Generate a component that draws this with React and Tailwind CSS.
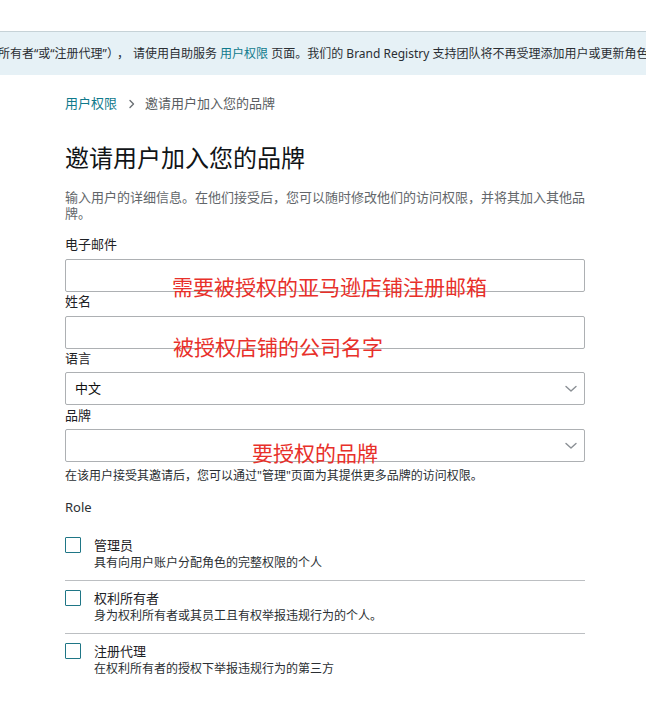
import { useState } from "react";

const FONT = { fontFamily: '"Noto Sans", "Noto Sans CJK SC", sans-serif' };

const roles = [
  { id: "admin", title: "管理员", desc: "具有向用户账户分配角色的完整权限的个人" },
  { id: "owner", title: "权利所有者", desc: "身为权利所有者或其员工且有权举报违规行为的个人。" },
  { id: "agent", title: "注册代理", desc: "在权利所有者的授权下举报违规行为的第三方" },
];

function Chevron() {
  return (
    <svg width="12" height="8" viewBox="0 0 12 8" fill="none" className="shrink-0">
      <path d="M1 1.5l5 4.5 5-4.5" stroke="#8a8f94" strokeWidth="1.4" strokeLinecap="round" strokeLinejoin="round" />
    </svg>
  );
}

// red hand-written notes that sit on top of the form
function Note({ children, className }) {
  return (
    <span
      className={`absolute pointer-events-none whitespace-nowrap text-[21px] leading-[21px] text-[#e8302a] ${className}`}
      style={{ fontFamily: '"Noto Sans CJK SC", sans-serif' }}
    >
      {children}
    </span>
  );
}

export default function App() {
  const [checked, setChecked] = useState({});

  const toggle = (id) => setChecked((prev) => ({ ...prev, [id]: !prev[id] }));

  return (
    <div className="w-[646px] h-[717px] bg-white overflow-hidden text-[#0f1111]" style={FONT}>
      {/* notice banner, text runs past both edges */}
      <div className="mt-[31px] h-[44px] border-t border-[#c6d2d7] bg-[#e6f1f6] flex items-center overflow-hidden">
        <p className="ml-[-2px] whitespace-nowrap text-[12px] leading-[16px] text-[#2a2e33]">
          所有者“或“注册代理”）<span className="mx-[4px]">，</span>请使用自助服务 <span className="text-[#0f7a8c]">用户权限</span> 页面。我们的 Brand Registry 支持团队将不再受理添加用户或更新角色的请求。
        </p>
      </div>

      <div className="pl-[65px] w-[585px]">
        {/* breadcrumb */}
        <div className="mt-[19px] h-[20px] flex items-center text-[13px]">
          <span className="text-[#0f7a8c]">用户权限</span>
          <svg width="8" height="10" viewBox="0 0 8 10" fill="none" className="ml-[11px] mr-[9px]">
            <path d="M2 1.5l3.5 3.5L2 8.5" stroke="#6b7075" strokeWidth="1.4" strokeLinecap="round" strokeLinejoin="round" />
          </svg>
          <span className="text-[#595d61]">邀请用户加入您的品牌</span>
        </div>

        <h1 className="mt-[28px] text-[24px] leading-[32px] font-normal text-[#111417]">邀请用户加入您的品牌</h1>

        <p className="mt-[15px] text-[13px] leading-[16px] text-[#62666a]">
          输入用户的详细信息。在他们接受后，您可以随时修改他们的访问权限，并将其加入其他品牌。
        </p>

        {/* form fields */}
        <div className="mt-[14px] flex flex-col">
          <label className="text-[13px] leading-[18px] text-[#1d2125]">电子邮件</label>
          <div className="relative mt-[6px]">
            <input className="w-full h-[33px] border border-[#adb0b3] rounded-[2px] px-2 text-[13px] outline-none" />
            <Note className="left-[107px] top-[17px]">需要被授权的亚马逊店铺注册邮箱</Note>
          </div>

          <label className="text-[13px] leading-[18px] text-[#1d2125]">姓名</label>
          <div className="relative mt-[6px]">
            <input className="w-full h-[33px] border border-[#adb0b3] rounded-[2px] px-2 text-[13px] outline-none" />
            <Note className="left-[108px] top-[20px]">被授权店铺的公司名字</Note>
          </div>

          <label className="text-[13px] leading-[18px] text-[#1d2125]">语言</label>
          <div className="mt-[5px] h-[33px] border border-[#adb0b3] rounded-[2px] flex items-center justify-between pl-[9px] pr-[7px]">
            <span className="text-[13px] text-[#0f1111]">中文</span>
            <Chevron />
          </div>

          <label className="mt-[1px] text-[13px] leading-[18px] text-[#1d2125]">品牌</label>
          <div className="relative mt-[5px] h-[33px] border border-[#adb0b3] rounded-[2px] flex items-center justify-end pr-[7px]">
            <Chevron />
            <Note className="left-[186px] top-[12px]">要授权的品牌</Note>
          </div>

          <p className="mt-[6px] text-[12px] leading-[16px] text-[#2b2f33]">
            在该用户接受其邀请后，您可以通过"管理"页面为其提供更多品牌的访问权限。
          </p>
        </div>

        {/* roles */}
        <div className="mt-[15px] text-[13px] leading-[16px] text-[#2b2f33]">Role</div>

        <div className="mt-[21px] flex flex-col">
          {roles.map((role, i) => (
            <div
              key={role.id}
              className={`flex items-start cursor-pointer ${i < roles.length - 1 ? "pb-[8px] border-b border-[#bcbfc2] mb-[8px]" : ""}`}
              onClick={() => toggle(role.id)}
            >
              <div className="mt-[1px] w-[16px] h-[16px] shrink-0 border-[1.5px] border-[#1f7686] rounded-[1px] bg-white flex items-center justify-center">
                {checked[role.id] && (
                  <svg width="10" height="8" viewBox="0 0 10 8" fill="none">
                    <path d="M1 4l3 3 5-6" stroke="#1f7686" strokeWidth="1.6" />
                  </svg>
                )}
              </div>
              <div className="ml-[13px] flex flex-col">
                <span className="text-[13px] leading-[18px] text-[#1d2125]">{role.title}</span>
                <span className="text-[12px] leading-[18px] text-[#2b2f33]">{role.desc}</span>
              </div>
            </div>
          ))}
        </div>
      </div>
    </div>
  );
}
